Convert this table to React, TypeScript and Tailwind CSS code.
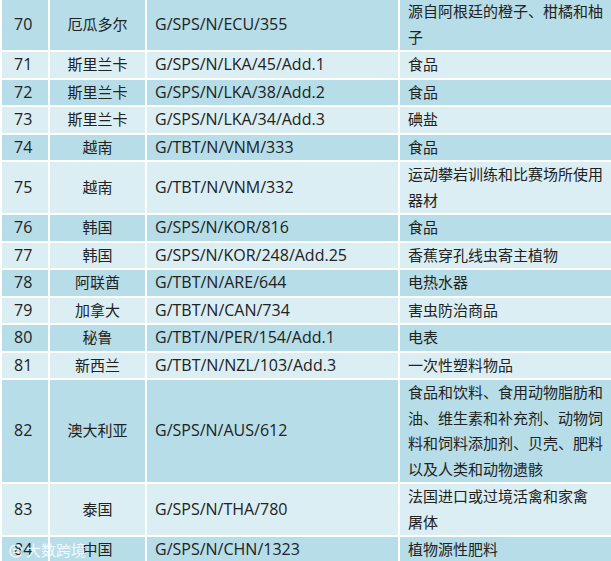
import type { ReactNode } from 'react';

const rows: [string, string, string, ReactNode][] = [
  ['70', '厄瓜多尔', 'G/SPS/N/ECU/355', '源自阿根廷的橙子、柑橘和柚子'],
  ['71', '斯里兰卡', 'G/SPS/N/LKA/45/Add.1', '食品'],
  ['72', '斯里兰卡', 'G/SPS/N/LKA/38/Add.2', '食品'],
  ['73', '斯里兰卡', 'G/SPS/N/LKA/34/Add.3', '碘盐'],
  ['74', '越南', 'G/TBT/N/VNM/333', '食品'],
  ['75', '越南', 'G/TBT/N/VNM/332', '运动攀岩训练和比赛场所使用器材'],
  ['76', '韩国', 'G/SPS/N/KOR/816', '食品'],
  ['77', '韩国', 'G/SPS/N/KOR/248/Add.25', '香蕉穿孔线虫寄主植物'],
  ['78', '阿联酋', 'G/TBT/N/ARE/644', '电热水器'],
  ['79', '加拿大', 'G/TBT/N/CAN/734', '害虫防治商品'],
  ['80', '秘鲁', 'G/TBT/N/PER/154/Add.1', '电表'],
  ['81', '新西兰', 'G/TBT/N/NZL/103/Add.3', '一次性塑料物品'],
  ['82', '澳大利亚', 'G/SPS/N/AUS/612', '食品和饮料、食用动物脂肪和油、维生素和补充剂、动物饲料和饲料添加剂、贝壳、肥料以及人类和动物遗骸'],
  ['83', '泰国', 'G/SPS/N/THA/780', <>法国进口或过境活禽和家禽<span className="whitespace-nowrap">屠体</span></>],
  ['84', '中国', 'G/SPS/N/CHN/1323', '植物源性肥料'],
];

export default function App() {
  return (
    <div className="relative w-[611px] h-[561px] overflow-hidden bg-white font-['Open_Sans','Noto_Sans_CJK_SC',sans-serif] text-[15px] leading-[25.5px] text-[#222]">
      <table className="mt-[-3px] border-collapse table-fixed w-[616px]">
        <colgroup>
          <col className="w-[48px]" />
          <col className="w-[97px]" />
          <col className="w-[253px]" />
          <col className="w-[218px]" />
        </colgroup>
        <tbody>
          {rows.map((r, i) => (
            <tr key={r[0]} className={i % 2 === 0 ? 'bg-[#b6dde8]' : 'bg-[#daeef3]'}>
              <td className="border-2 border-white pl-3 align-middle text-[16px]">{r[0]}</td>
              <td className="border-2 border-white text-center align-middle">{r[1]}</td>
              <td className="border-2 border-white pl-2 align-middle whitespace-nowrap text-[16px]">{r[2]}</td>
              <td className="border-2 border-white pl-2 pr-3 align-top">{r[3]}</td>
            </tr>
          ))}
        </tbody>
      </table>
      {/* watermark */}
      <div className="absolute left-[8px] top-[538px] flex items-center gap-[2px] text-white/80 text-[15px]">
        <svg width="16" height="16" viewBox="0 0 16 16" fill="none" stroke="currentColor" strokeWidth="1.5">
          <circle cx="8" cy="8" r="6" />
          <path d="M5 6.5h6M5 9.5h6" />
        </svg>
        <span>大数跨境</span>
      </div>
    </div>
  );
}
